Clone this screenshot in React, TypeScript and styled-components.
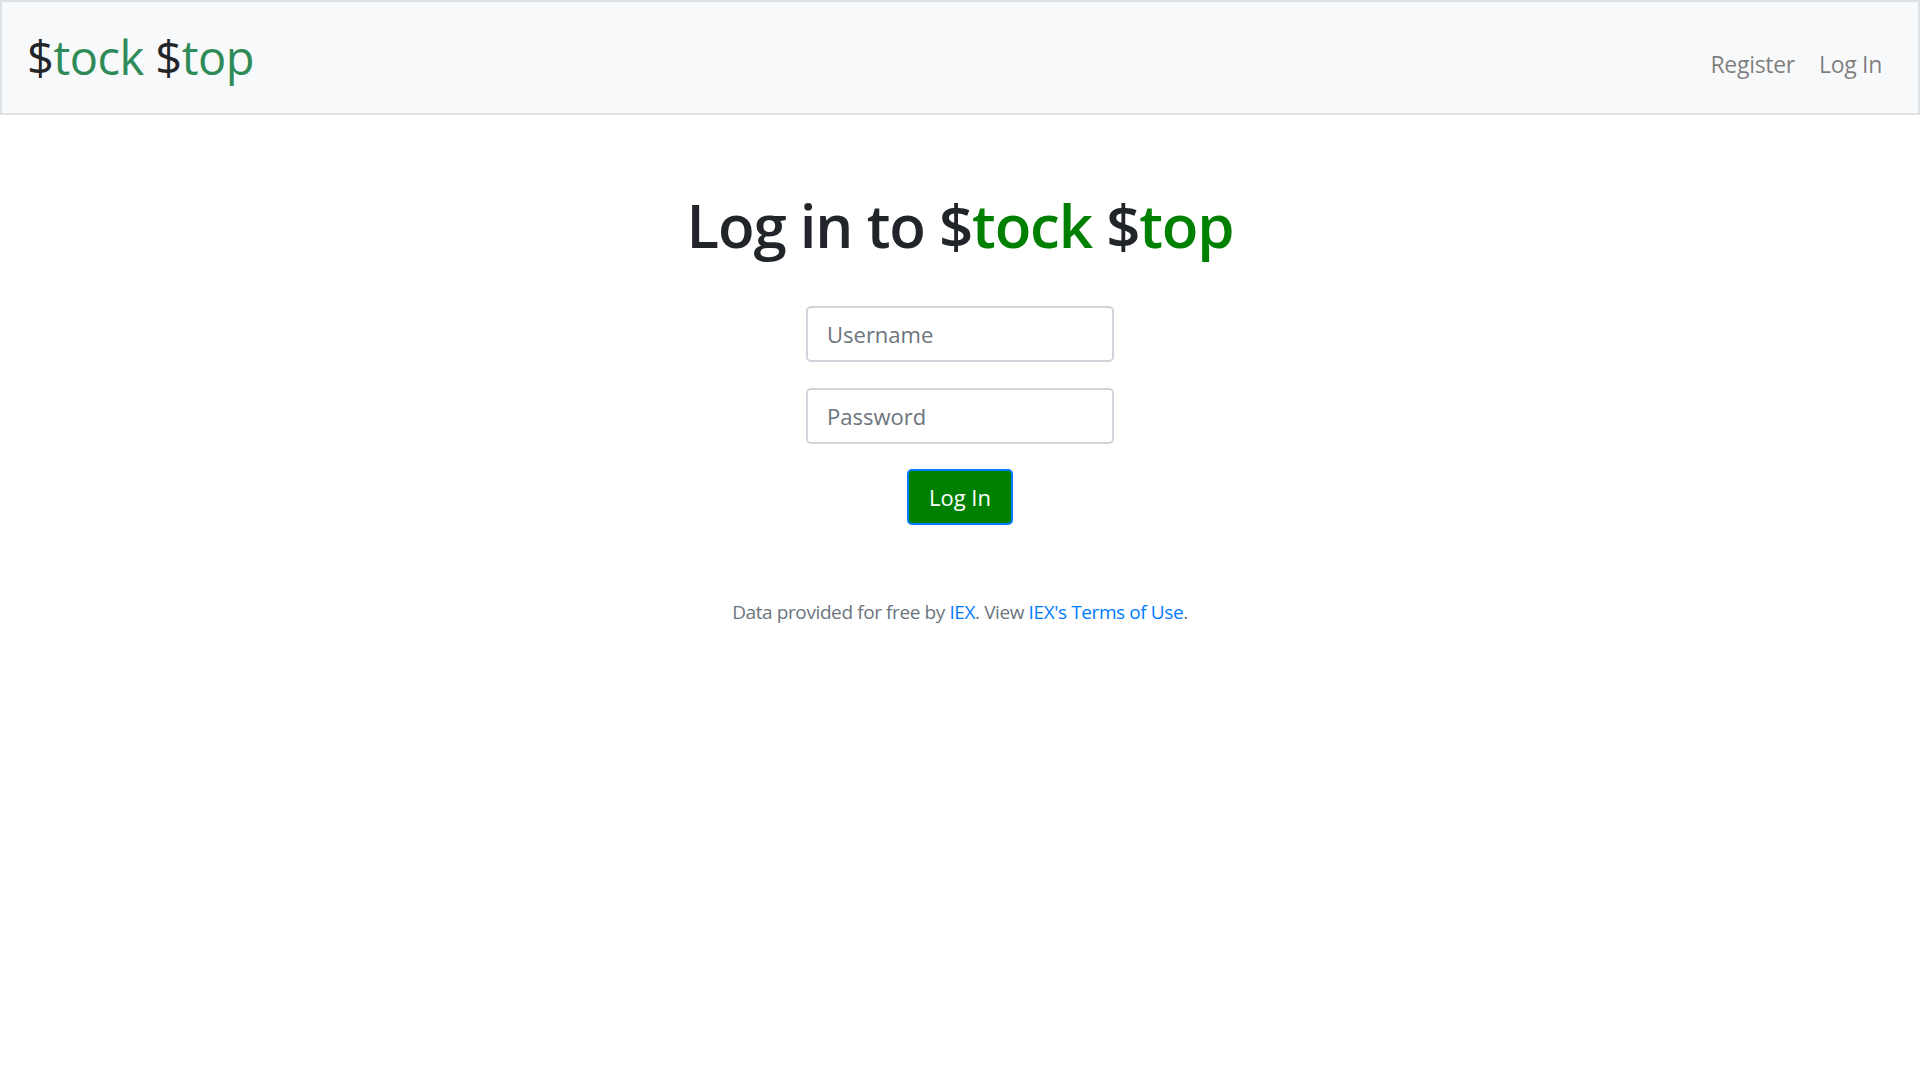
import React from "react";
import styled, { createGlobalStyle } from "styled-components";

const GlobalStyle = createGlobalStyle`
  html, body { margin: 0; padding: 0; background: #fff; }
  body {
    font-family: "Open Sans", "Noto Sans", "Liberation Sans", sans-serif;
    color: #212529;
  }
  * { box-sizing: border-box; }
`;

const Navbar = styled.nav`
  display: flex;
  align-items: center;
  justify-content: space-between;
  height: 115px;
  padding: 0 36px 0 25px;
  background: #f8f9fa;
  border: 2px solid #dee2e6;
`;

const Brand = styled.a`
  font-size: 47px;
  line-height: 1;
  color: #212529;
  text-decoration: none;
  letter-spacing: -0.5px;
`;

const Green = styled.span<{ $shade: string }>`
  color: ${(p) => p.$shade};
`;

const NavLinks = styled.div`
  display: flex;
  gap: 24px;
  margin-top: 12px;
`;

const NavLink = styled.a`
  font-size: 23px;
  color: rgba(0, 0, 0, 0.5);
  text-decoration: none;
  letter-spacing: -0.3px;
`;

const Main = styled.main`
  display: flex;
  flex-direction: column;
  align-items: center;
  padding-top: 74px;
`;

const Title = styled.h1`
  margin: 0 0 45px;
  font-size: 60px;
  font-weight: 600;
  line-height: 72px;
  letter-spacing: -1.2px;
  color: #212529;
`;

const Form = styled.form`
  display: flex;
  flex-direction: column;
  align-items: center;
  gap: 26px;
`;

const Input = styled.input`
  width: 308px;
  height: 56px;
  padding: 0 19px;
  font-family: inherit;
  font-size: 22px;
  color: #495057;
  border: 2px solid #ced4da;
  border-radius: 5px;
  background: #fff;
  outline: none;
  &::placeholder { color: #6c757d; opacity: 1; }
`;

const Button = styled.button`
  width: 106px;
  height: 56px;
  margin-top: -1px;
  font-family: inherit;
  font-size: 22px;
  color: #fff;
  background: #008000;
  border: 2px solid #007bff;
  border-radius: 5px;
  cursor: pointer;
`;

const Footer = styled.p`
  margin: 74px 0 0;
  font-size: 19px;
  color: #6c757d;
  letter-spacing: -0.4px;
`;

const Link = styled.a`
  color: #007bff;
  text-decoration: none;
`;

export default function App() {
  return (
    <>
      <GlobalStyle />
      <Navbar>
        <Brand href="#">
          $<Green $shade="seagreen">tock</Green> $<Green $shade="seagreen">top</Green>
        </Brand>
        <NavLinks>
          <NavLink href="#">Register</NavLink>
          <NavLink href="#">Log In</NavLink>
        </NavLinks>
      </Navbar>
      <Main>
        <Title>
          Log in to $<Green $shade="#008000">tock</Green> $<Green $shade="#008000">top</Green>
        </Title>
        <Form onSubmit={(e) => e.preventDefault()}>
          <Input type="text" placeholder="Username" />
          <Input type="password" placeholder="Password" />
          <Button type="submit">Log In</Button>
        </Form>
        <Footer>
          Data provided for free by <Link href="#">IEX</Link>. View{" "}
          <Link href="#">IEX's Terms of Use</Link>.
        </Footer>
      </Main>
    </>
  );
}
